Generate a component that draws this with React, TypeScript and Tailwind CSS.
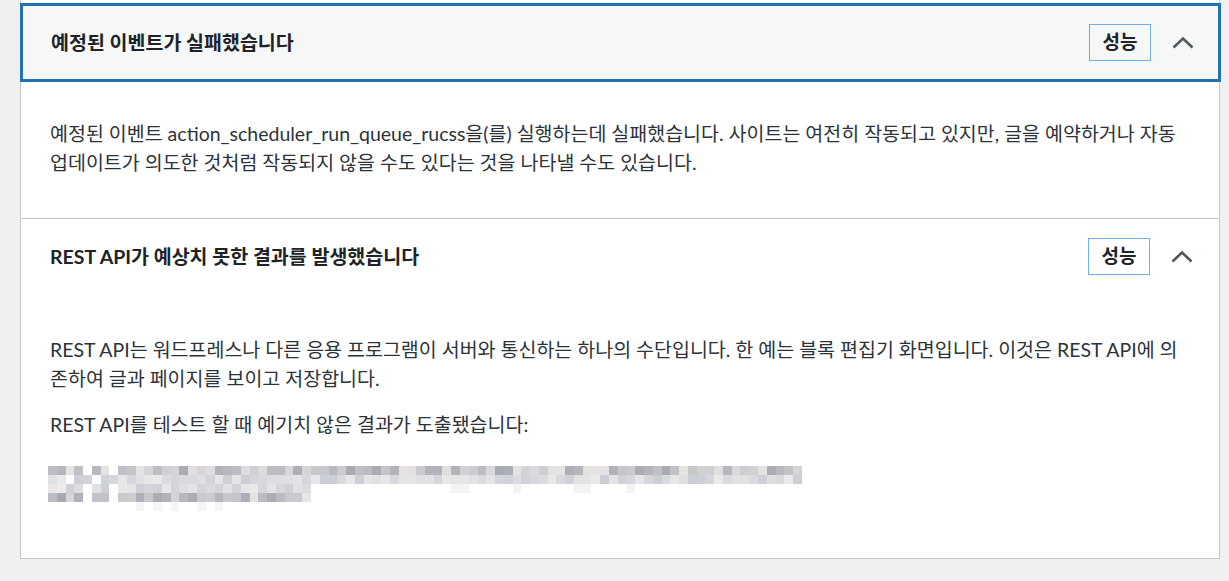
import React from 'react'

const font = { fontFamily: 'Lato, "Noto Sans CJK KR", sans-serif' }

// pixelated placeholder for the redacted response text
function makeRow(seed: number, count: number, gaps: number[], light: boolean) {
  let s = seed
  const out: string[] = []
  for (let i = 0; i < count; i++) {
    s = (s * 9301 + 49297) % 233280
    const r = s / 233280
    if (gaps.includes(i)) {
      out.push('#ffffff')
      continue
    }
    const base = light ? 205 + Math.floor(r * 30) : 170 + Math.floor(r * 60)
    const tint = Math.floor(r * 7) - 3
    out.push(`rgb(${base + tint},${base},${base + 4 - tint})`)
  }
  return out
}

function Pixels({ rows }: { rows: string[][] }) {
  return (
    <div className="flex flex-col">
      {rows.map((row, i) => (
        <div key={i} className="flex h-[9px]">
          {row.map((c, j) => (
            <div key={j} className="h-[9px] w-[8.77px] shrink-0" style={{ backgroundColor: c }} />
          ))}
        </div>
      ))}
    </div>
  )
}

function Badge() {
  return (
    <span className="flex h-[37px] w-[62px] items-center justify-center border border-[#72aee6] text-[19px] font-bold text-[#1d2327]">
      성능
    </span>
  )
}

function Chevron() {
  return (
    <svg width="22" height="13" viewBox="0 0 22 13" className="ml-[21px]">
      <polyline points="1.5,11.5 11,2.5 20.5,11.5" fill="none" stroke="#50575e" strokeWidth="2.6" />
    </svg>
  )
}

export default function App() {
  const line1 = [
    makeRow(3, 86, [4, 7], false),
    makeRow(11, 86, [2, 5], true),
    makeRow(29, 86, [], true).map((c, i) => ([20, 46, 47, 53, 60, 61, 66].includes(i) ? '#f3f3f4' : '#ffffff')),
  ]
  const line2 = [
    makeRow(41, 30, [4, 7], true),
    makeRow(53, 30, [4, 7], false),
    makeRow(67, 30, [], true).map((c, i) => ([10, 12, 14, 17, 19].includes(i) ? '#f5f5f6' : '#ffffff')),
  ]

  return (
    <div className="h-[581px] w-[1229px] overflow-hidden bg-[#f0f0f1]" style={font}>
      <div className="ml-[20px] w-[1200px] border-x border-b border-[#c3c4c7] bg-white pt-[3px]">
        {/* scheduled event */}
        <div className="border-b border-[#c3c4c7]">
          <div className="-ml-px flex h-[79px] w-[1201px] items-center border-[3px] border-[#2271b1] bg-[#f6f7f7] pl-[28px] pr-[24px]">
            <h3 className="flex-1 text-[19.5px] font-bold text-[#1d2327]">예정된 이벤트가 실패했습니다</h3>
            <Badge />
            <Chevron />
          </div>
          <div className="px-[29px] pb-[41px] pt-[37px] text-[19.5px] leading-[29px] text-[#2c3338]">
            <p className="whitespace-nowrap">
              예정된 이벤트 action_scheduler_run_queue_rucss을(를) 실행하는데 실패했습니다. 사이트는 여전히 작동되고 있지만, 글을 예약하거나 자동
              <br />
              업데이트가 의도한 것처럼 작동되지 않을 수도 있다는 것을 나타낼 수도 있습니다.
            </p>
          </div>
        </div>

        {/* REST API */}
        <div>
          <div className="flex h-[75px] items-center bg-white pl-[29px] pr-[26px]">
            <h3 className="flex-1 text-[19.5px] font-bold text-[#1d2327]">REST API가 예상치 못한 결과를 발생했습니다</h3>
            <Badge />
            <Chevron />
          </div>
          <div className="px-[29px] pb-[47px] pt-[41px] text-[19.5px] leading-[29px] text-[#2c3338]">
            <p className="whitespace-nowrap">
              REST API는 워드프레스나 다른 응용 프로그램이 서버와 통신하는 하나의 수단입니다. 한 예는 블록 편집기 화면입니다. 이것은 REST API에 의
              <br />
              존하여 글과 페이지를 보이고 저장합니다.
            </p>
            <p className="mt-[17px]">REST API를 테스트 할 때 예기치 않은 결과가 도출됐습니다:</p>
            <div className="mt-[27px] -ml-[2px] flex flex-col gap-[8px]">
              <Pixels rows={line1} />
              <div className="-mt-[17px]">
                <Pixels rows={line2} />
              </div>
            </div>
          </div>
        </div>
      </div>
    </div>
  )
}
